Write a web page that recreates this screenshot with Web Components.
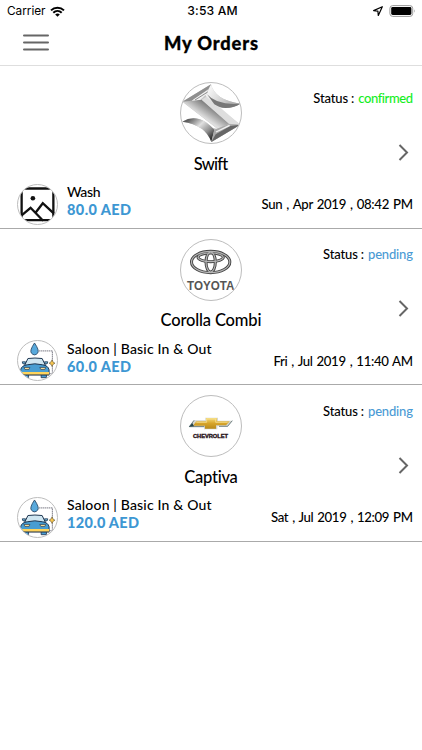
<!DOCTYPE html>
<html lang="en">
<head>
<meta charset="utf-8">
<title>My Orders</title>
<style>
    body {
        margin: 0;
        background-color: #fff;
        color: #000;
        font-family: Lato, "Open Sans", sans-serif;
    }
</style>
</head>
<body>
<orders-page></orders-page>

<script>
// Text whose tracking is adjusted so the line takes the given width
class FitLabel extends HTMLElement {
    constructor() {
        super();
        this.shadow = this.attachShadow({mode: 'open'});
    }

    connectedCallback() {
        this.shadow.innerHTML = `
        <style>
            :host {
                display: inline-block;
                white-space: nowrap;
            }
        </style>
        <slot></slot>
        `;

        const width = Number(this.getAttribute('width'));
        const natural = this.getBoundingClientRect().width;
        const spacing = (width - natural) / (this.textContent.length - 1);
        this.style.letterSpacing = spacing + 'px';
        this.style.marginRight = -spacing + 'px';
    }
}

class StatusBar extends HTMLElement {
    constructor() {
        super();
        this.shadow = this.attachShadow({mode: 'open'});
    }

    connectedCallback() {
        this.shadow.innerHTML = `
        <style>
            :host {
                display: grid;
                grid-template-columns: 1fr auto 1fr;
                align-items: center;
                box-sizing: border-box;
                height: 22px;
                padding: 0 6px 0 7px;
                font: 400 11.8px/22px Inter, sans-serif;
            }
            .left, .right {
                display: flex;
                align-items: center;
            }
            .left {
                gap: 5px;
            }
            .right {
                justify-content: flex-end;
                gap: 6px;
            }
            .time {
                padding-left: 2px;
                font-size: 12.2px;
                font-weight: 500;
            }
            svg {
                display: block;
            }
        </style>
        <div class="left">
            <fit-label width="38.5">Carrier</fit-label>
            <svg width="15" height="11" viewBox="0 0 15 11" fill="none" stroke="#000" stroke-width="2">
                <path d="M1 4.4C4.6.9 10.4.9 14 4.4M3.3 6.8c2.4-2.3 6-2.3 8.4 0"/>
                <path d="M7.5 10.7 5.2 8.4c1.3-1.2 3.3-1.2 4.6 0z" fill="#000" stroke="none"/>
            </svg>
        </div>
        <div class="time"><fit-label width="50.5">3:53 AM</fit-label></div>
        <div class="right">
            <svg width="10" height="10" viewBox="0 0 10 10" fill="none" stroke="#000" stroke-width="1.2" stroke-linejoin="round">
                <path d="M9.3.7.6 4.6l4.3.5.4 4.3z"/>
            </svg>
            <svg width="27" height="12" viewBox="0 0 27 12">
                <rect x=".9" y=".6" width="22.8" height="10.8" rx="2.8" fill="#fff" stroke="#999" stroke-width="1"/>
                <rect x="2.2" y="2" width="20.2" height="8" rx="1.4"/>
                <path d="M25 4.2q1.5 1.8 0 3.6z" fill="#999"/>
            </svg>
        </div>
        `;
    }
}

class NavBar extends HTMLElement {
    constructor() {
        super();
        this.shadow = this.attachShadow({mode: 'open'});
    }

    connectedCallback() {
        this.shadow.innerHTML = `
        <style>
            :host {
                display: grid;
                grid-template-columns: 1fr auto 1fr;
                box-sizing: border-box;
                height: 44px;
                padding: 0 23px;
                border-bottom: 1px solid #dedede;
            }
            svg {
                display: block;
                margin-top: 12px;
            }
            h1 {
                margin: 0;
                font-size: 18.3px;
                font-weight: 900;
                line-height: 43px;
                -webkit-text-stroke: .3px #000;
            }
        </style>
        <svg width="26" height="18" viewBox="0 0 26 18" stroke="#666" stroke-width="2" stroke-linecap="round">
            <path d="M1 1.5h24M1 8.5h24M1 15.5h24"/>
        </svg>
        <h1><fit-label width="94">${this.getAttribute('heading')}</fit-label></h1>
        `;
    }
}

class RoundBadge extends HTMLElement {
    constructor() {
        super();
        this.shadow = this.attachShadow({mode: 'open'});
    }

    connectedCallback() {
        this.shadow.innerHTML = `
        <style>
            :host {
                display: block;
                box-sizing: border-box;
                width: var(--size, 62px);
                height: var(--size, 62px);
                border: 1px solid #bdbdbd;
                border-radius: 50%;
                overflow: hidden;
            }
            svg {
                display: block;
                width: 100%;
                height: 100%;
            }
        </style>
        ${RoundBadge.art[this.getAttribute('name')]}
        `;
    }
}

RoundBadge.art = {
    suzuki: `
        <svg viewBox="34 24 180 180">
            <defs>
                <linearGradient id="tail" gradientUnits="userSpaceOnUse" x1="120" y1="45" x2="205" y2="95">
                    <stop offset="0" stop-color="#f4f4f4"/><stop offset=".5" stop-color="#cfcfcf"/>
                    <stop offset="1" stop-color="#9a9a9a"/>
                </linearGradient>
                <linearGradient id="band" gradientUnits="userSpaceOnUse" x1="120" y1="85" x2="95" y2="122">
                    <stop offset="0" stop-color="#6f6f6f"/><stop offset=".5" stop-color="#a5a5a5"/>
                    <stop offset="1" stop-color="#dedede"/>
                </linearGradient>
                <linearGradient id="low" gradientUnits="userSpaceOnUse" x1="60" y1="132" x2="118" y2="195">
                    <stop offset="0" stop-color="#606060"/><stop offset=".4" stop-color="#e0e0e0"/>
                    <stop offset=".75" stop-color="#8e8e8e"/><stop offset="1" stop-color="#333"/>
                </linearGradient>
            </defs>
            <path d="M38 80 124 28Q136 76 212 86 190 99 168 99 150 99 134 88L212 149 125 201Q108 150 38 140 62 125 88 132 108 137 128 158L144 162z" fill="#c6c6c6"/>
            <path d="M40 80 96 74 178 146 144 162z" fill="url(#band)"/>
            <path d="M96 74 112 64 212 149 178 146z" fill="#dedede"/>
            <path d="M124 28Q136 76 212 86 190 99 168 99 150 99 134 88L108 62z" fill="url(#tail)"/>
            <path d="M112 58Q142 92 212 86 190 99 168 99 150 99 134 88z" fill="#777"/>
            <path d="M38 80 124 28 114 46 66 77z" fill="#8f8f8f"/>
            <path d="M66 77 116 43 110 58 92 74z" fill="#f0f0f0"/>
            <path d="M76 75 114 51" stroke="#777" stroke-width="2.5"/>
            <path d="M38 140Q62 125 88 132 108 137 134 164L125 201Q108 150 38 140z" fill="url(#low)"/>
            <path d="M125 201 134 164 178 147 212 149z" fill="#aaa"/>
            <path d="M125 201 138 178 182 153 212 149z" fill="#666"/>
            <path d="M139 171 180 151" stroke="#f2f2f2" stroke-width="4"/>
        </svg>`,
    toyota: `
        <svg viewBox="34 24 180 180">
            <g fill="none" stroke="#444" stroke-width="9">
                <ellipse cx="123" cy="90" rx="57.5" ry="32"/>
                <ellipse cx="123" cy="76" rx="38" ry="13"/>
                <ellipse cx="123" cy="90" rx="14" ry="30"/>
            </g>
            <g fill="none" stroke="#b5b5b5" stroke-width="3.5">
                <ellipse cx="123" cy="90" rx="57.5" ry="32"/>
                <ellipse cx="123" cy="76" rx="38" ry="13"/>
                <ellipse cx="123" cy="90" rx="14" ry="30"/>
            </g>
            <text x="52" y="173" font-family="Liberation Sans, Arial, sans-serif" font-weight="700" font-size="36" fill="#555" textLength="142" lengthAdjust="spacingAndGlyphs">TOYOTA</text>
        </svg>`,
    chevrolet: `
        <svg viewBox="34 18 180 180">
            <defs>
                <linearGradient id="gold" x1="0" y1="0" x2="0" y2="1">
                    <stop offset="0" stop-color="#f7dc7b"/><stop offset=".5" stop-color="#d7a52b"/>
                    <stop offset="1" stop-color="#b88a1c"/>
                </linearGradient>
            </defs>
            <path d="M73 91H107V83H145V92H188L174 109H143V118H103V110H59z" fill="#d4d5cf"/>
            <path d="M188 92 174 109H148M73 91 59 110H104" fill="none" stroke="#344b52" stroke-width="2"/>
            <path d="M80 94H109V84H142V94H180L169 106H139V116H106V107H70z" fill="url(#gold)"/>
            <path d="M80 97H111V87H138V97H174" fill="none" stroke="#f9e7a1" stroke-width="2"/>
            <path d="M58 110 68 99 73 109z" fill="#27444a"/>
            <text x="70" y="145" font-family="Liberation Sans, Arial, sans-serif" font-weight="700" font-size="14" fill="#29151c" stroke="#29151c" stroke-width="1" textLength="105" lengthAdjust="spacingAndGlyphs">CHEVROLET</text>
        </svg>`,
    picture: `
        <svg viewBox="54 29 118 118">
            <g fill="none" stroke="#111" stroke-width="7">
                <rect x="65" y="39.5" width="96" height="96" rx="3"/>
                <path d="M65 121 92 98 130 137M107 113 129 84 162 115" stroke-width="7"/>
            </g>
            <circle cx="99" cy="69" r="7" fill="#111"/>
        </svg>`,
    car: `
        <svg viewBox="54 27 118 118">
            <path d="M118 57H158V126H148" fill="none" stroke="#223" stroke-width="2" stroke-dasharray="4 2"/>
            <path d="M104 33Q119 55 114 63 104 75 94 63 89 55 104 33z" fill="#58a9dc" stroke="#26425e" stroke-width="2.5"/>
            <path d="M157 84Q159 93 166 94 159 96 157 104 155 96 148 94 155 92 157 84z" fill="#f5c451" stroke="#443d28" stroke-width="1.5"/>
            <path d="M70 128H86V138H70zM124 128H140V138H124z" fill="#4a9ed6" stroke="#26364c" stroke-width="2.5"/>
            <g stroke="#1e3650" stroke-width="3" stroke-linejoin="round">
                <path d="M67 90H77L74 97Q66 97 67 90zM144 90H134L137 97Q145 97 144 90z" fill="#77bee3" stroke-width="2.5"/>
                <path d="M74 101 84 80Q105 77 127 80L137 101z" fill="#cfe6f1"/>
                <path d="M62 129V114Q65 101 82 99L105 96 128 99Q145 101 148 114V129z" fill="#489dd2"/>
            </g>
            <path d="M72 107H90L87 113H75zM120 107H138L135 113H123z" fill="#ffe59b" stroke="#26364c" stroke-width="2"/>
            <path d="M62 121H148V129H62z" fill="#ffd35a"/>
            <path d="M61 130H149" stroke="#263447" stroke-width="2.5"/>
        </svg>`
};

class OrderRow extends HTMLElement {
    constructor() {
        super();
        this.shadow = this.attachShadow({mode: 'open'});
    }

    connectedCallback() {
        this.shadow.innerHTML = `
        <style>
            :host {
                display: grid;
                grid-template-columns: 1fr auto 1fr;
                grid-template-rows: 62px 38px 1fr;
                box-sizing: border-box;
                height: 156.5px;
                padding: 10px 9px 0 17px;
                border-bottom: 1px solid #aaa;
            }
            .logo {
                grid-column: 1 / -1;
                justify-self: center;
                grid-row: 1;
                margin-right: 8px;
            }
            .status {
                grid-column: 1 / -1;
                grid-row: 1;
                justify-self: end;
                display: flex;
                gap: 4px;
                height: 18px;
                margin-top: 6.5px;
                font-size: 13px;
                line-height: 18px;
                font-weight: 500;
            }
            .status .confirmed {
                color: #14ee1e;
            }
            .status .pending {
                color: #4a9ad4;
            }
            .vehicle {
                grid-column: 1 / -1;
                grid-row: 2;
                justify-self: center;
                margin: 7.5px 8px 0 0;
                font-size: 16.5px;
                line-height: 24px;
                font-weight: 500;
            }
            .arrow {
                grid-column: 1 / -1;
                grid-row: 1 / 3;
                justify-self: end;
                align-self: end;
                margin: 0 4px 21.5px 0;
            }
            .bottom {
                grid-column: 1 / -1;
                grid-row: 3;
                display: flex;
                align-items: flex-start;
            }
            .service-icon {
                --size: 41px;
                margin: 1.5px 9px 0 0;
            }
            .service {
                flex: 1;
                display: flex;
                flex-direction: column;
                align-items: flex-start;
                padding-top: 1.3px;
                font-size: 14px;
                line-height: 18px;
                font-weight: 500;
            }
            .price {
                color: #3d97d3;
                font-size: 14.5px;
                line-height: 17px;
                font-weight: 900;
            }
            .date {
                margin-top: 13px;
                font-size: 13.2px;
                line-height: 18px;
                font-weight: 500;
                word-spacing: 1px;
            }
        </style>
        <round-badge class="logo" name="${this.getAttribute('logo')}"></round-badge>
        <div class="status">
            <fit-label width="41">Status :</fit-label>
            <fit-label class="${this.getAttribute('status')}" width="${this.getAttribute('status-width')}">${this.getAttribute('status')}</fit-label>
        </div>
        <div class="vehicle"><fit-label width="${this.getAttribute('vehicle-width')}">${this.getAttribute('vehicle')}</fit-label></div>
        <svg class="arrow" width="11" height="17" viewBox="0 0 11 17" fill="none" stroke="#666" stroke-width="2">
            <path d="M1.5 1 9 8.5 1.5 16"/>
        </svg>
        <div class="bottom">
            <round-badge class="service-icon" name="${this.getAttribute('icon')}"></round-badge>
            <div class="service">
                <fit-label width="${this.getAttribute('service-width')}">${this.getAttribute('service').replace('&', '&amp;')}</fit-label>
                <fit-label class="price" width="${this.getAttribute('price-width')}">${this.getAttribute('price')}</fit-label>
            </div>
            <fit-label class="date" width="${this.getAttribute('date-width')}">${this.getAttribute('date')}</fit-label>
        </div>
        `;
    }
}

class OrdersPage extends HTMLElement {
    constructor() {
        super();
        this.shadow = this.attachShadow({mode: 'open'});
    }

    connectedCallback() {
        this.shadow.innerHTML = `
        <style>
            :host {
                display: flex;
                flex-direction: column;
                box-sizing: border-box;
                height: 750px;
                overflow: hidden;
            }
            main {
                padding-top: 6px;
            }
        </style>
        <status-bar></status-bar>
        <nav-bar heading="My Orders"></nav-bar>
        <main>
            <order-row logo="suzuki" vehicle="Swift" vehicle-width="34" status="confirmed" status-width="54.5"
                icon="picture" service="Wash" service-width="33.5" price="80.0 AED" price-width="64"
                date="Sun , Apr 2019 , 08:42 PM" date-width="151.5"></order-row>
            <order-row logo="toyota" vehicle="Corolla Combi" vehicle-width="101" status="pending" status-width="45"
                icon="car" service="Saloon | Basic In & Out" service-width="144.5" price="60.0 AED" price-width="64"
                date="Fri , Jul 2019 , 11:40 AM" date-width="139.5"></order-row>
            <order-row logo="chevrolet" vehicle="Captiva" vehicle-width="54" status="pending" status-width="45"
                icon="car" service="Saloon | Basic In & Out" service-width="144.5" price="120.0 AED" price-width="72"
                date="Sat , Jul 2019 , 12:09 PM" date-width="142"></order-row>
        </main>
        `;
    }
}

customElements.define('fit-label', FitLabel);
customElements.define('status-bar', StatusBar);
customElements.define('nav-bar', NavBar);
customElements.define('round-badge', RoundBadge);
customElements.define('order-row', OrderRow);
customElements.define('orders-page', OrdersPage);
</script>
</body>
</html>
